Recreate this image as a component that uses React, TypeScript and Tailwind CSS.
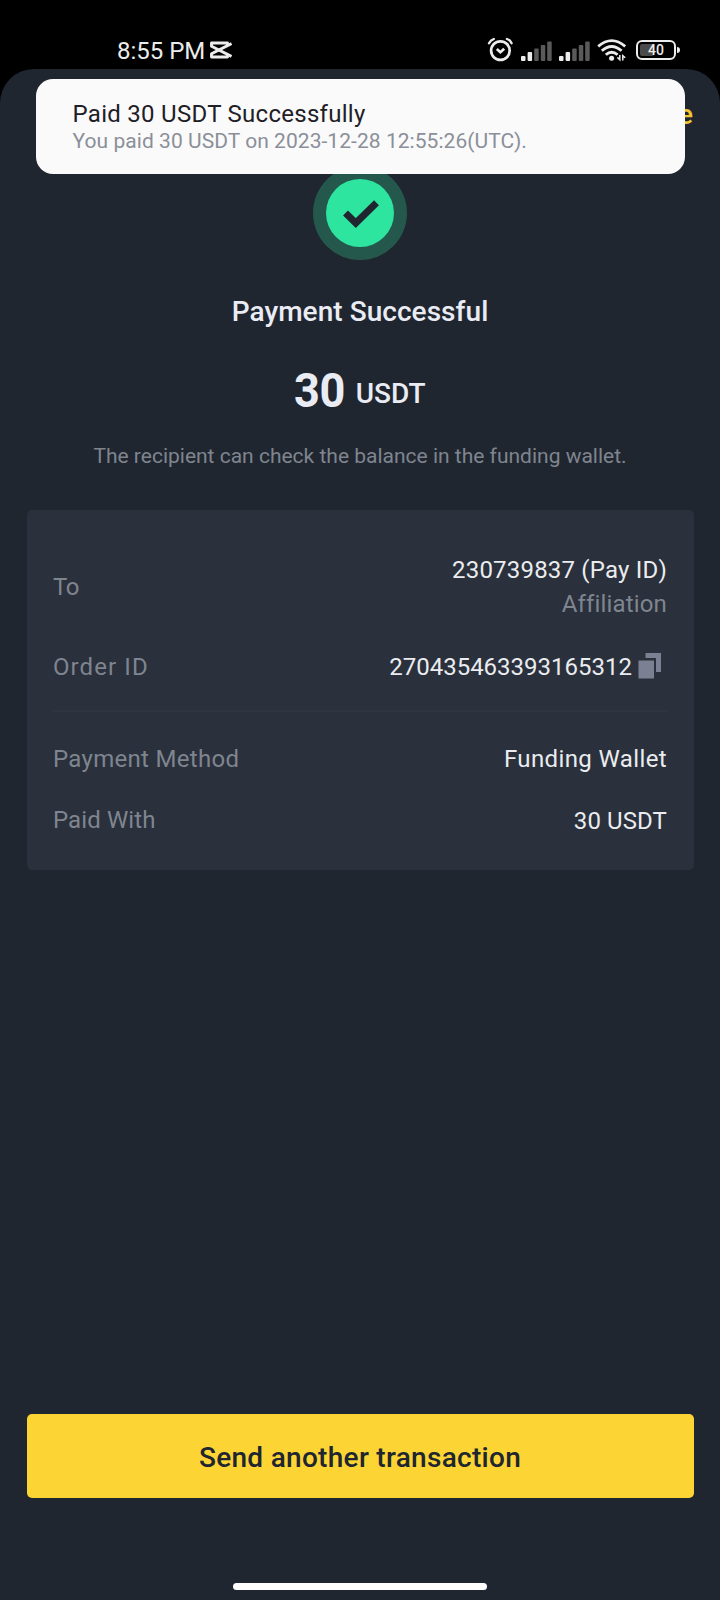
import React from "react";

const CapCutIcon = () => (
  <svg width="22" height="18" viewBox="0 0 22 18" fill="none" stroke="#ececec" strokeWidth="2.9">
    <path d="M21.5 2.6 L1.5 12.8 V16 H17.5 V13.6" strokeLinejoin="round" />
    <path d="M21.5 15.4 L1.5 5.2 V2 H17.5 V4.4" strokeLinejoin="round" />
  </svg>
);

const AlarmIcon = () => (
  <svg width="26" height="25" viewBox="0 0 26 25" fill="none" stroke="#ececec" strokeLinecap="round">
    <circle cx="13.4" cy="13.6" r="9.3" strokeWidth="2.7" />
    <path d="M9.8 12 L13.4 15.2 L17.2 11.8" strokeWidth="2.8" strokeLinecap="butt" />
    <path d="M2 6.2 Q3.6 3.2 6.8 2" strokeWidth="2.4" />
    <path d="M24.6 6.2 Q23.2 3.2 20 2" strokeWidth="2.4" />
  </svg>
);

const bars = [
  { x: 0, h: 5, on: true },
  { x: 6.6, h: 9, on: true },
  { x: 13.2, h: 12.5, on: false },
  { x: 19.8, h: 16, on: false },
  { x: 26.2, h: 19.5, on: false },
];

const SignalIcon = () => (
  <svg width="31" height="20" viewBox="0 0 31 20">
    {bars.map((b) => (
      <rect key={b.x} x={b.x} y={20 - b.h} width="4.5" height={b.h} rx="1" fill={b.on ? "#ececec" : "#5a5a5a"} />
    ))}
  </svg>
);

const WifiIcon = () => (
  <svg width="30" height="23" viewBox="0 0 30 23" fill="none" stroke="#ececec" strokeWidth="2.8">
    <path d="M1.2 7.4 Q14.6 -4.2 28.2 7.4" />
    <path d="M4.8 11.8 Q14.6 3.2 24.6 11.8" />
    <path d="M8.8 15.8 Q14.6 10.6 20.6 15.8" />
    <circle cx="14.6" cy="19.2" r="2.5" fill="#ececec" stroke="none" />
    <path d="M20.4 18.4 L22.8 20.8 V16" strokeWidth="1.5" />
    <path d="M28.2 18.8 L25.8 16.6 V21.6" strokeWidth="1.5" />
  </svg>
);

const CopyIcon = () => (
  <svg width="24" height="26" viewBox="0 0 24 26" fill="#7b8192">
    <path d="M7.5 0 H23 V19 H18 V5 H7.5 Z" />
    <rect x="0.5" y="7.5" width="15.5" height="18" />
  </svg>
);

const StatusBar = () => (
  <div className="flex h-[69px] items-start justify-between pl-[117px] pr-10 text-[#ececec]">
    <div className="flex items-start pt-[36px]">
      <span className="text-[24px] leading-[30px]">8:55 PM</span>
      <div className="ml-[5px] mt-[5px]">
        <CapCutIcon />
      </div>
    </div>
    <div className="flex items-start pt-[37px]">
      <AlarmIcon />
      <div className="ml-[8px] mt-[4px]">
        <SignalIcon />
      </div>
      <div className="ml-[7px] mt-[4px]">
        <SignalIcon />
      </div>
      <div className="ml-[7px] mt-[2px]">
        <WifiIcon />
      </div>
      <div className="ml-[9px] mt-[3px] flex items-center">
        <div className="flex h-[20px] w-[40px] rounded-[6px] border-2 border-[#ececec] p-[2px]">
          <div className="flex h-full w-[14px] items-center rounded-[2px] bg-[#4a4a4a] pl-[8px] text-[14px] font-medium leading-none">
            40
          </div>
        </div>
        <div className="ml-[1px] h-[6px] w-[3px] rounded-r-sm bg-[#ececec]" />
      </div>
    </div>
  </div>
);

const Toast = () => (
  <div className="absolute left-[35.5px] top-[79px] h-[95px] w-[649px] rounded-[17px] bg-[#fafafa] pl-[37px] pt-[20px]">
    <p className="text-[24px] leading-[30px] tracking-[0.28px] text-[#1e2026]">Paid 30 USDT Successfully</p>
    <p className="mt-[-1px] text-[21px] leading-[26px] tracking-[0.05px] text-[#8a8f99]">
      You paid 30 USDT on 2023-12-28 12:55:26(UTC).
    </p>
  </div>
);

const SuccessBadge = () => (
  <div className="flex size-[94px] items-center justify-center rounded-full bg-[#25584d]">
    <div className="flex size-[68px] items-center justify-center rounded-full bg-[#2ee5a0] pl-[2px] pt-[3px]">
      <svg width="36" height="28" viewBox="0 0 36 28" fill="none" stroke="#202630" strokeWidth="7">
        <path d="M2.5 13 L12.8 23 L33.5 2.8" />
      </svg>
    </div>
  </div>
);

const DetailsCard = () => (
  <section className="mt-[38px] h-[360px] w-[667px] rounded-[5px] bg-[#2a303c] px-[26.5px] pt-[43px] text-[24px] leading-[34px] text-[#eaecef]">
    <div className="flex items-center justify-between">
      <span className="tracking-[-0.5px] text-[#7f858f]">To</span>
      <div className="text-right">
        <p className="tracking-[0.2px]">230739837 (Pay ID)</p>
        <p className="tracking-[0.15px] text-[#7f858f]">Affiliation</p>
      </div>
    </div>
    <div className="mt-[29px] flex items-center justify-between">
      <span className="tracking-[1.1px] text-[#7f858f]">Order ID</span>
      <div className="flex items-center pr-[5px]">
        <span>270435463393165312</span>
        <div className="ml-[6px] mt-[-2px]">
          <CopyIcon />
        </div>
      </div>
    </div>
    <div className="mt-[26px] h-[2px] bg-[#2e3440]" />
    <div className="mt-[30px] flex justify-between">
      <span className="tracking-[0.3px] text-[#7f858f]">Payment Method</span>
      <span className="tracking-[0.38px]">Funding Wallet</span>
    </div>
    <div className="mt-[27px] flex justify-between">
      <span className="tracking-[0.1px] text-[#7f858f]">Paid With</span>
      <span className="pt-px tracking-[0.1px]">30 USDT</span>
    </div>
  </section>
);

export default function App() {
  return (
    <main className="relative flex h-[1600px] w-[720px] flex-col overflow-hidden bg-black font-['Roboto',sans-serif]">
      <StatusBar />
      <div className="flex flex-1 flex-col items-center rounded-t-[34px] bg-[#202630]">
        <div className="flex w-full justify-end pr-[27px] pt-[26px] text-[28px] font-medium leading-[40px] text-[#f0c52e]">
          Done
        </div>
        <div className="mt-[30.5px]">
          <SuccessBadge />
        </div>
        <h1 className="mt-[32.5px] text-[28px] font-medium leading-[40px] tracking-[0.05px] text-[#eaecf4]">
          Payment Successful
        </h1>
        <div className="mt-[31px] flex items-end text-[#eaecf4]">
          <span className="origin-left scale-x-[0.92] text-[49px] font-bold leading-[56px] tracking-[-0.5px]">30</span>
          <span className="ml-[6px] pb-[5px] text-[28px] font-medium leading-[40px]">USDT</span>
        </div>
        <p className="mt-[21px] text-[21px] leading-[32px] text-[#7f858f]">
          The recipient can check the balance in the funding wallet.
        </p>
        <DetailsCard />
        <button className="mt-auto h-[84px] w-[667px] rounded-[5px] bg-[#fcd535] pt-[4px] text-[28px] font-medium leading-[40px] tracking-[0.3px] text-[#202630]">
          Send another transaction
        </button>
        <div className="mb-[10px] mt-[85px] h-[7px] w-[254px] rounded-full bg-white" />
      </div>
      <Toast />
    </main>
  );
}
